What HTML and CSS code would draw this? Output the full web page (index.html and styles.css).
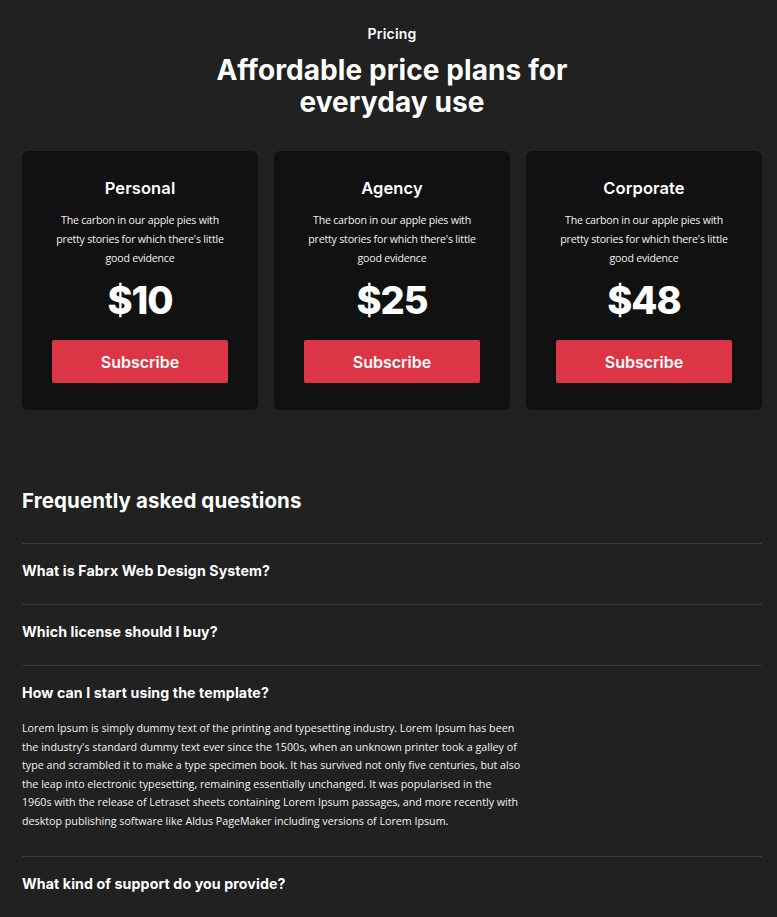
FILE: index.html
```html
<!DOCTYPE html>
<html lang="en">
<head>
<meta charset="utf-8">
<title>Pricing</title>
<link rel="stylesheet" href="styles.css">
</head>
<body>
<main class="page">
  <section class="pricing">
    <p class="eyebrow">Pricing</p>
    <h1 class="title">Affordable price plans for<br>everyday use</h1>
    <div class="plans">
      <div class="plan">
        <h2 class="plan-name">Personal</h2>
        <p class="plan-desc">The carbon in our apple pies with pretty stories for which there's little good evidence</p>
        <div class="plan-price">$10</div>
        <button class="btn">Subscribe</button>
      </div>
      <div class="plan">
        <h2 class="plan-name">Agency</h2>
        <p class="plan-desc">The carbon in our apple pies with pretty stories for which there's little good evidence</p>
        <div class="plan-price">$25</div>
        <button class="btn">Subscribe</button>
      </div>
      <div class="plan">
        <h2 class="plan-name">Corporate</h2>
        <p class="plan-desc">The carbon in our apple pies with pretty stories for which there's little good evidence</p>
        <div class="plan-price">$48</div>
        <button class="btn">Subscribe</button>
      </div>
    </div>
  </section>
  <section class="faq">
    <h2 class="faq-title">Frequently asked questions</h2>
    <div class="faq-list">
      <div class="faq-item"><h3 class="q">What is Fabrx Web Design System?</h3></div>
      <div class="faq-item"><h3 class="q">Which license should I buy?</h3></div>
      <div class="faq-item open">
        <h3 class="q">How can I start using the template?</h3>
        <p class="a">Lorem Ipsum is simply dummy text of the printing and typesetting industry. Lorem Ipsum has been the industry's standard dummy text ever since the 1500s, when an unknown printer took a galley of type and scrambled it to make a type specimen book. It has survived not only five centuries, but also the leap into electronic typesetting, remaining essentially unchanged. It was popularised in the 1960s with the release of Letraset sheets containing Lorem Ipsum passages, and more recently with desktop publishing software like Aldus PageMaker including versions of Lorem Ipsum.</p>
      </div>
      <div class="faq-item"><h3 class="q">What kind of support do you provide?</h3></div>
    </div>
  </section>
</main>
</body>
</html>
```
FILE: styles.css
```css
* { box-sizing: border-box; }
html, body {
  margin: 0;
  background: #212121;
  color: #fff;
  font-family: "Open Sans", "Liberation Sans", sans-serif;
}
.page {
  padding: 0 15px 0 22px;
}
.pricing {
  display: flex;
  flex-direction: column;
  align-items: center;
  padding-top: 24px;
}
.eyebrow {
  margin: 0;
  font-family: "Inter", sans-serif;
  font-weight: 600;
  font-size: 14px;
  line-height: 20px;
  letter-spacing: 0.2px;
}
.title {
  margin: 10px 0 0;
  font-family: "Inter", sans-serif;
  font-weight: 700;
  font-size: 28px;
  line-height: 32px;
  text-align: center;
  letter-spacing: 0.1px;
}
.plans {
  margin-top: 33px;
  width: 100%;
  display: grid;
  grid-template-columns: repeat(3, 1fr);
  gap: 16px;
}
.plan {
  background: #111111;
  border-radius: 6px;
  padding: 27px 30px 27px;
  display: flex;
  flex-direction: column;
  align-items: center;
  text-align: center;
}
.plan-name {
  margin: 0;
  font-family: "Inter", sans-serif;
  font-weight: 600;
  font-size: 16.5px;
  line-height: 20px;
  letter-spacing: 0.1px;
}
.plan-desc {
  margin: 13px 0 0;
  font-size: 10.6px;
  line-height: 19px;
  letter-spacing: -0.2px;
  color: #f2f2f2;
}
.plan-price {
  margin-top: 10px;
  font-family: "Inter", sans-serif;
  font-weight: 800;
  font-size: 38px;
  line-height: 44px;
  letter-spacing: -1px;
}
.btn {
  margin-top: 18px;
  width: 100%;
  height: 43px;
  border: 0;
  border-radius: 2px;
  background: #dc3545;
  color: #fff;
  font-family: "Inter", sans-serif;
  font-weight: 600;
  font-size: 16px;
}
.faq {
  padding-top: 78px;
}
.faq-title {
  margin: 0;
  font-family: "Inter", sans-serif;
  font-weight: 700;
  font-size: 20.5px;
  line-height: 26px;
  letter-spacing: 0.1px;
}
.faq-list {
  margin-top: 29px;
}
.faq-item {
  border-top: 1px solid #3a3a3a;
  padding: 17px 0 23px;
}
.faq-item:last-child {
  border-bottom: 1px solid #3a3a3a;
}
.q {
  margin: 0;
  font-family: "Inter", sans-serif;
  font-weight: 700;
  font-size: 14.2px;
  line-height: 20px;
  letter-spacing: 0.1px;
}
.faq-item.open {
  padding-bottom: 25px;
}
.a {
  margin: 16px 0 0;
  max-width: 500px;
  font-size: 10.7px;
  line-height: 18.6px;
  color: #f2f2f2;
}
```
